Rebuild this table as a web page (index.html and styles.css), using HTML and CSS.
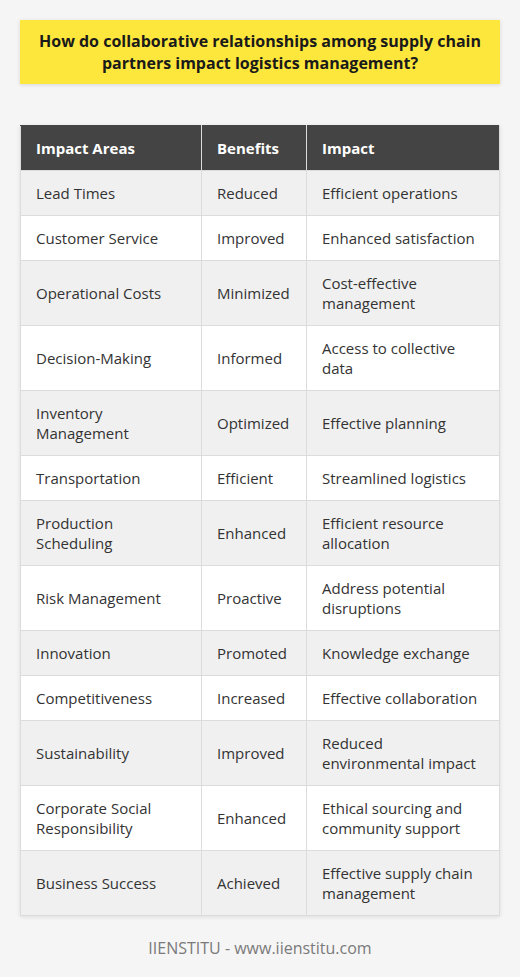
FILE: index.html
```html
<!DOCTYPE html>
<html>
<head>
<meta charset="utf-8">
<link rel="stylesheet" href="styles.css">
</head>
<body>
<div class="page">
  <h1 class="title">How do collaborative relationships among supply chain partners impact logistics management?</h1>
  <table class="grid">
    <thead>
      <tr><th class="c1">Impact Areas</th><th class="c2">Benefits</th><th class="c3">Impact</th></tr>
    </thead>
    <tbody>
      <tr><td>Lead Times</td><td>Reduced</td><td>Efficient operations</td></tr>
      <tr><td>Customer Service</td><td>Improved</td><td>Enhanced satisfaction</td></tr>
      <tr><td>Operational Costs</td><td>Minimized</td><td>Cost-effective management</td></tr>
      <tr><td>Decision-Making</td><td>Informed</td><td>Access to collective data</td></tr>
      <tr><td>Inventory Management</td><td>Optimized</td><td>Effective planning</td></tr>
      <tr><td>Transportation</td><td>Efficient</td><td>Streamlined logistics</td></tr>
      <tr><td>Production Scheduling</td><td>Enhanced</td><td>Efficient resource allocation</td></tr>
      <tr><td>Risk Management</td><td>Proactive</td><td>Address potential disruptions</td></tr>
      <tr><td>Innovation</td><td>Promoted</td><td>Knowledge exchange</td></tr>
      <tr><td>Competitiveness</td><td>Increased</td><td>Effective collaboration</td></tr>
      <tr><td>Sustainability</td><td>Improved</td><td>Reduced environmental impact</td></tr>
      <tr><td>Corporate Social Responsibility</td><td>Enhanced</td><td>Ethical sourcing and community support</td></tr>
      <tr><td>Business Success</td><td>Achieved</td><td>Effective supply chain management</td></tr>
    </tbody>
  </table>
  <p class="footer">IIENSTITU - www.iienstitu.com</p>
</div>
</body>
</html>
```
FILE: styles.css
```css
html, body {
  margin: 0;
  padding: 0;
  background: #f5f5f5;
}
.page {
  font-family: "Open Sans", "Liberation Sans", sans-serif;
  padding: 20px 20px 0 20px;
  color: #333;
}
.title {
  margin: 0;
  background: #fde73c;
  color: #1a1a1a;
  font-size: 16px;
  font-weight: 700;
  line-height: 22px;
  text-align: center;
  padding: 10px 12px 10px;
  box-shadow: 0 1px 4px rgba(0,0,0,0.12);
}
.grid {
  margin-top: 41px;
  width: 480px;
  border-collapse: collapse;
  font-size: 15px;
  line-height: 20px;
  box-shadow: 0 1px 4px rgba(0,0,0,0.1);
  table-layout: fixed;
}
.grid th, .grid td {
  border: 1px solid #dcdcdc;
  padding: 12px 15px;
  text-align: left;
  vertical-align: middle;
}
.grid th {
  background: #444444;
  color: #fff;
  font-weight: 700;
  border-color: #dcdcdc;
  border-top-color: #444;
}
.c1 { width: 150px; }
.c2 { width: 74px; }
.grid tbody tr:nth-child(odd) td { background: #f0f0f0; }
.grid tbody tr:nth-child(even) td { background: #ffffff; }
.grid tbody td { color: #333; }
.footer {
  margin: 22px 0 0;
  text-align: center;
  color: #7a7a7a;
  font-size: 16px;
  line-height: 20px;
}
```
